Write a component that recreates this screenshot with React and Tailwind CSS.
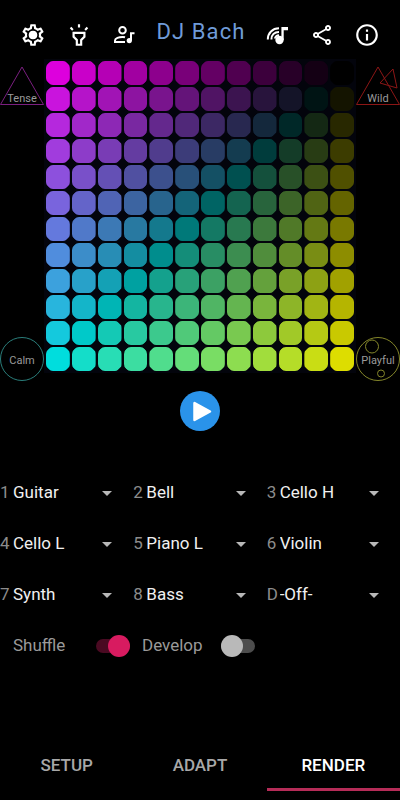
import { useState } from "react";
import {
 MdOutlineHighlight,
 MdOutlineInfo,
 MdOutlineSettings,
 MdOutlineShare,
 MdArrowDropDown,
} from "react-icons/md";

const SIZE = 12;
const MAX = 221;

const TRACKS = [
 { key: "1", value: "Guitar" },
 { key: "2", value: "Bell" },
 { key: "3", value: "Cello H" },
 { key: "4", value: "Cello L" },
 { key: "5", value: "Piano L" },
 { key: "6", value: "Violin" },
 { key: "7", value: "Synth" },
 { key: "8", value: "Bass" },
 { key: "D", value: "-Off-" },
];

const INSTRUMENTS = TRACKS.map((track) => track.value);

const TABS = ["SETUP", "ADAPT", "RENDER"];

// magenta (top left), black (top right), cyan (bottom left), yellow (bottom right)
function padColor(row, col) {
 const last = SIZE - 1;
 const over = row + col - last;
 const magenta = Math.max(0, -over) / last;
 const yellow = Math.max(0, over) / last;
 const cyan = Math.min(row, last - col) / last;
 const r = Math.round((magenta + yellow) * MAX);
 const g = Math.round((cyan + yellow) * MAX);
 const b = Math.round((magenta + cyan) * MAX);
 return `rgb(${r}, ${g}, ${b})`;
}

function SettingsIcon() {
 return (
  <span className="relative block">
   <MdOutlineSettings size={26} />
   <svg viewBox="0 0 26 26" className="absolute inset-0 size-full">
    <circle cx="13" cy="13" r="4" fill="currentColor" />
   </svg>
  </span>
 );
}

function ArtistIcon() {
 return (
  <svg viewBox="0 0 24 24" className="size-6" fill="none" stroke="currentColor" strokeWidth="2">
   <circle cx="10.500" cy="7.300" r="3.300" />
   <path d="M13 19H3v-1.500c0-2.200 4-3.500 7.500-3.500 1 0 1.800.1 2.500.3" />
   <circle cx="17.300" cy="17.600" r="2.600" fill="currentColor" stroke="none" />
   <path d="M19 17.600V10.200h3.500" />
  </svg>
 );
}

function MusicCastIcon() {
 return (
  <svg viewBox="0 0 24 24" className="size-6" fill="none" stroke="currentColor" strokeWidth="2">
   <path d="M1.800 16.500C1.800 10 6.500 5.300 13 5.300M5.400 16.500C5.400 12 8.500 9 13 9M9 15.500c0-1.800 1.800-3.300 4-3.300" />
   <circle cx="13.500" cy="17" r="4.200" fill="currentColor" stroke="none" />
   <path d="M15.400 17V4H22v3.300h-4.300V17Z" fill="currentColor" stroke="none" />
  </svg>
 );
}

function Mood({ name, children }) {
 return (
  <button type="button" className="relative block w-full aspect-square">
   <svg viewBox="0 0 44 44" className="w-full" fill="none" strokeWidth="1">
    {children}
   </svg>
   <span className={`absolute inset-x-0 text-center text-[11px] leading-4 text-[#9a9a9a] ${name === "Tense" || name === "Wild" ? "bottom-0.5" : "bottom-3"}`}>
    {name}
   </span>
  </button>
 );
}

function Pads() {
 return (
  <div className="grid grid-cols-12 gap-0.5 aspect-[308/310] bg-[#03040c] outline-2 outline-[#03040c]">
   {[...Array(SIZE * SIZE)].map((_, i) => {
    const row = Math.floor(i / SIZE);
    const col = i % SIZE;
    return (
     <button
      key={i}
      type="button"
      aria-label={`Pad ${row + 1}-${col + 1}`}
      className="rounded-[7px] [clip-path:polygon(20%_0,80%_0,100%_20%,100%_80%,80%_100%,20%_100%,0_80%,0_20%)]"
      style={{ backgroundColor: padColor(row, col) }}
     />
    );
   })}
  </div>
 );
}

function Track({ track }) {
 const [value, setValue] = useState(track.value);
 const id = `track-${track.key}`;

 return (
  <div className="relative flex items-center h-8 text-[17px]">
   <label htmlFor={id} className="w-[13px] shrink-0 text-[#8c8c8c]">
    {track.key}
   </label>
   <select
    id={id}
    value={value}
    onChange={(e) => setValue(e.target.value)}
    className="appearance-none bg-transparent text-[#f0f0f0] w-full h-8 outline-none"
   >
    {INSTRUMENTS.map((name) => (
     <option key={name} value={name} className="bg-black">
      {name}
     </option>
    ))}
   </select>
   <MdArrowDropDown size={24} className="absolute right-3.5 text-[#b8b8b8] pointer-events-none" />
  </div>
 );
}

function Toggle({ label, labelWidth, defaultChecked }) {
 return (
  <label className="flex items-center text-[17px] text-[#9a9a9a]">
   <span className={labelWidth}>{label}</span>
   <span className="relative flex items-center w-[34px] h-6">
    <input type="checkbox" role="switch" defaultChecked={defaultChecked} className="peer appearance-none w-full h-3.5 rounded-full bg-[#4d4d4d] checked:bg-[#4a0a22]" />
    <span className="absolute left-0 size-[22px] rounded-full bg-[#b9b9b9] peer-checked:left-auto peer-checked:right-0 peer-checked:bg-[#d81b60] pointer-events-none" />
   </span>
  </label>
 );
}

export default function App() {
 const [tab, setTab] = useState("RENDER");

 return (
  <div className="min-h-screen flex flex-col bg-black text-white font-[Roboto,sans-serif]">
   {/* Toolbar */}
   <header className="flex items-center justify-between h-[59px] pt-2.5 px-5">
    <button type="button" aria-label="Settings"><SettingsIcon /></button>
    <button type="button" aria-label="Lights"><MdOutlineHighlight size={26} /></button>
    <button type="button" aria-label="Artist"><ArtistIcon /></button>
    <h1 className="text-[22px] leading-8 pb-1.5 tracking-wider text-[#6f9bd8]">DJ Bach</h1>
    <button type="button" aria-label="Cast"><MusicCastIcon /></button>
    <button type="button" aria-label="Share"><MdOutlineShare size={24} /></button>
    <button type="button" aria-label="Info"><MdOutlineInfo size={26} /></button>
   </header>

   {/* Pads with a mood in each corner */}
   <main className="grid grid-cols-[44px_1fr_44px] gap-x-0.5 pt-0.5">
    <div className="flex flex-col justify-between pt-1 -mb-2.5">
     <Mood name="Tense">
      <path d="M22 2 43.500 39.500H.5Z" stroke="#7b1f80" />
     </Mood>
     <Mood name="Calm">
      <circle cx="22" cy="22" r="21.500" stroke="#2a7d7a" />
     </Mood>
    </div>
    <Pads />
    <div className="flex flex-col justify-between pt-1 -mb-2.5">
     <Mood name="Wild">
      <path d="M22 2 43.500 39.500H.5ZM37 4 24 18 41 23Z" stroke="#8c1616" />
     </Mood>
     <Mood name="Playful">
      <circle cx="22" cy="22" r="21.500" stroke="#84862a" />
      <circle cx="16" cy="9.500" r="6.500" stroke="#84862a" />
      <circle cx="25" cy="36.500" r="3.500" stroke="#84862a" />
     </Mood>
    </div>
   </main>

   <button type="button" aria-label="Play" className="mx-auto mt-5 size-10 rounded-full bg-[#2a93ea]">
    <svg viewBox="0 0 40 40" className="size-full">
     <path d="M14.500 12v17l15.500-8.500Z" fill="#fff" stroke="#fff" strokeWidth="2.500" strokeLinejoin="round" />
    </svg>
   </button>

   {/* Tracks */}
   <section className="grid grid-cols-3 gap-y-[19px] mt-[46px]">
    {TRACKS.map((track) => (
     <Track key={track.key} track={track} />
    ))}
   </section>

   <section className="flex gap-3 mt-[22px] pl-[13px]">
    <Toggle label="Shuffle" labelWidth="w-[83px]" defaultChecked />
    <Toggle label="Develop" labelWidth="w-[79px]" />
   </section>

   {/* Tabs */}
   <nav className="grid grid-cols-3 mt-auto">
    {TABS.map((name) => (
     <button
      key={name}
      type="button"
      onClick={() => setTab(name)}
      className={`h-[60px] pt-3 mb-[9px] border-b-3 font-medium text-[17px] ${tab === name ? "border-[#b52c58] text-white" : "border-transparent text-[#a8a8a8]"}`}
     >
      {name}
     </button>
    ))}
   </nav>
  </div>
 );
}
